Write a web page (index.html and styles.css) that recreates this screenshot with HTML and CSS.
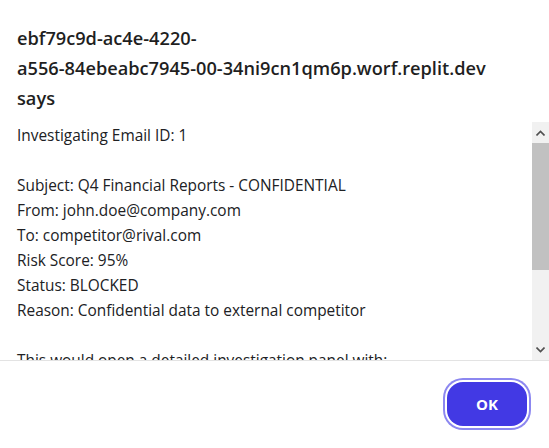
FILE: index.html
```html
<!DOCTYPE html>
<html>
<head>
<meta charset="utf-8">
<link rel="stylesheet" href="styles.css">
</head>
<body>
<div class="dialog">
  <h1 class="title">ebf79c9d-ac4e-4220-<br>a556-84ebeabc7945-00-34ni9cn1qm6p.worf.replit.dev<br>says</h1>
  <div class="content">
    <div class="msg">Investigating Email ID: 1

Subject: Q4 Financial Reports - CONFIDENTIAL
From: john.doe@company.com
To: competitor@rival.com
Risk Score: 95%
Status: BLOCKED
Reason: Confidential data to external competitor

This would open a detailed investigation panel with:
- Full email content
- Attachment analysis
- Sender history
- Recommended actions</div>
    <div class="scrollbar">
      <div class="sb-btn">
        <svg width="9" height="6" viewBox="0 0 9 6"><path d="M0.5 5.5 L4.5 1.5 L8.5 5.5" fill="none" stroke="#505050" stroke-width="1.6"/></svg>
      </div>
      <div class="sb-thumb"></div>
      <div class="sb-track"></div>
      <div class="sb-btn">
        <svg width="9" height="6" viewBox="0 0 9 6"><path d="M0.5 0.5 L4.5 4.5 L8.5 0.5" fill="none" stroke="#505050" stroke-width="1.6"/></svg>
      </div>
    </div>
  </div>
  <div class="footer">
    <button class="ok">OK</button>
  </div>
</div>
</body>
</html>
```
FILE: styles.css
```css
html, body {
  margin: 0;
  padding: 0;
  background: #ffffff;
}
.dialog {
  width: 549px;
  height: 448px;
  display: flex;
  flex-direction: column;
  font-family: "Open Sans", "Noto Sans", sans-serif;
  color: #1f1f1f;
}
.title {
  margin: 0;
  padding: 23px 17px 0;
  font-size: 18.2px;
  line-height: 30px;
  font-weight: 600;
  height: 90px;
  color: #1f1f1f;
}
.content {
  margin-top: 9px;
  height: 238px;
  display: flex;
}
.msg {
  flex: 1;
  overflow: hidden;
  padding-left: 17px;
  padding-top: 1px;
  font-size: 15.4px;
  line-height: 25px;
  white-space: pre-line;
  color: #202124;
}
.scrollbar {
  width: 17px;
  display: flex;
  flex-direction: column;
  background: #f1f1f1;
}
.sb-btn {
  height: 21px;
  display: flex;
  align-items: center;
  justify-content: center;
}
.sb-thumb {
  height: 127px;
  background: #c1c1c1;
}
.sb-track {
  flex: 1;
}
.footer {
  border-top: 1px solid #e3e3e3;
  flex: 1;
  display: flex;
  justify-content: flex-end;
  align-items: flex-start;
  padding: 21px 22px 0 0;
}
.ok {
  width: 80px;
  height: 44px;
  border: none;
  border-radius: 16px;
  background: #4239e4;
  color: #ffffff;
  font-family: "Open Sans", "Noto Sans", sans-serif;
  font-weight: 700;
  font-size: 15px;
  box-shadow: 0 0 0 2px #ffffff, 0 0 0 4px #8c87f0;
  padding: 0;
}
```
